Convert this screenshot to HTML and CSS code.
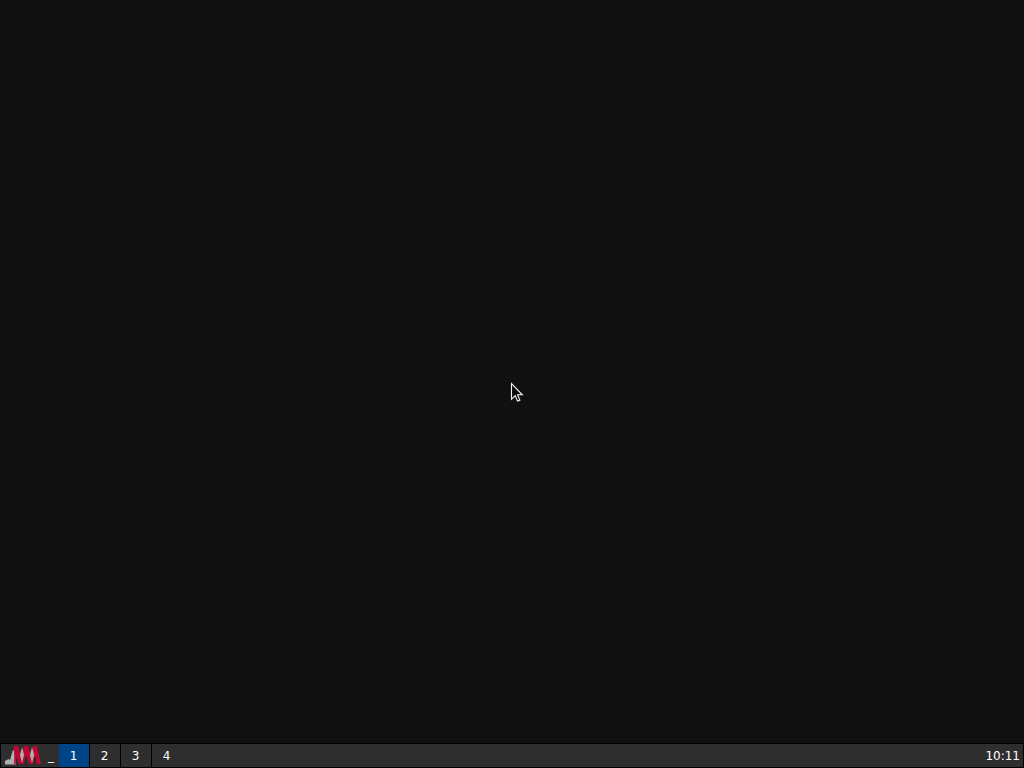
FILE: index.html
```html
<!DOCTYPE html>
<html lang="en">
<head>
    <meta charset="UTF-8">
    <title>JWM Desktop</title>
    <link rel="stylesheet" href="styles.css">
</head>
<body>
    <div class="desktop">
        <svg class="cursor" width="14" height="21" viewBox="0 0 14 21">
            <path d="M1.5 1.5V17.2L5.2 13.7L7.6 19.1L9.9 18.1L7.5 12.8H12.3Z" fill="#080808" stroke="#f4f4f4" stroke-width="1.1"/>
        </svg>
    </div>
    <div class="tray">
        <button class="menu-btn" aria-label="Menu">
            <svg width="38" height="21" viewBox="0 0 38 21">
                <path d="M1 19.5V16L4.5 14L6 15L8.5 6L10 5L12 19.5Z" fill="#b0b0b0"/>
                <path d="M9.5 1H14L19 19H15L12 12L11.5 19H10L10.5 10Z" fill="#bd0834"/>
                <path d="M20 1H24.5L29 19H25L22 10L19.5 19H16Z" fill="#bd0834"/>
                <path d="M29 1H33L37 19H33L31 11L28.5 19H25Z" fill="#bd0834"/>
                <path d="M18 2L20 10L18 18L16 10ZM28 2L30.2 10L28 18L26 10Z" fill="#b8acac"/>
            </svg>
        </button>
        <button class="show-desktop">_</button>
        <div class="pager">
            <button class="desk active">1</button>
            <button class="desk">2</button>
            <button class="desk">3</button>
            <button class="desk">4</button>
        </div>
        <div class="clock">10:11</div>
    </div>
</body>
</html>
```

FILE: styles.css
```css
* {
    margin: 0;
    padding: 0;
    box-sizing: border-box;
}

body {
    height: 100vh;
    display: flex;
    flex-direction: column;
    overflow: hidden;
    background: #101010;
    color: #fff;
    font-family: "DejaVu Sans", sans-serif;
    font-size: 12px;
}

button {
    border: none;
    background: none;
    color: inherit;
    font: inherit;
}

.desktop {
    flex: 1;
    position: relative;
}

.cursor {
    position: absolute;
    left: 510px;
    top: 382px;
}

.tray {
    height: 25px;
    display: flex;
    border: 1px solid #000;
    background: #2e2e2e;
}

.menu-btn {
    width: 45px;
    padding-left: 3px;
    text-align: left;
}

.menu-btn svg {
    display: block;
}

.show-desktop {
    width: 13px;
    padding-right: 3px;
}

.pager {
    display: flex;
    gap: 1px;
    background: #000;
}

.pager .desk {
    width: 30px;
    background: #2e2e2e;
    padding-right: 1px;
}

.pager .desk.active {
    background: #004488;
}

.clock {
    margin-left: auto;
    padding-right: 3px;
    line-height: 25px;
}
```
